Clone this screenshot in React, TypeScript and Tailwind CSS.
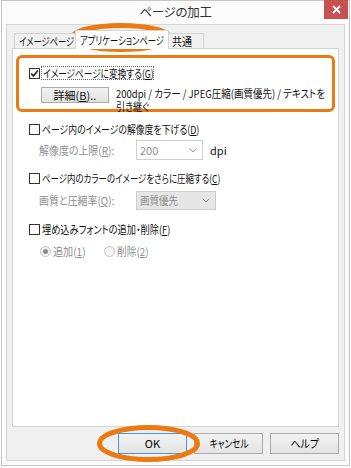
import React, { useLayoutEffect, useRef, useState } from "react";

function Box({ checked = false }: { checked?: boolean }) {
  return (
    <span className="flex h-[11px] w-[11px] shrink-0 items-center justify-center border border-[#333] bg-white">
      {checked && (
        <svg width="9" height="9" viewBox="0 0 9 9">
          <path d="M1.2 4.6 L3.5 7 L7.8 1.6" fill="none" stroke="#222" strokeWidth="1.6" />
        </svg>
      )}
    </span>
  );
}

function Radio({ on = false }: { on?: boolean }) {
  return (
    <span className="flex h-[11px] w-[11px] shrink-0 items-center justify-center rounded-full border border-[#c4c4c4] bg-[#f4f4f4]">
      {on && <span className="h-[5px] w-[5px] rounded-full bg-[#8c8c8c]" />}
    </span>
  );
}

function Chevron() {
  return (
    <svg width="8" height="5" viewBox="0 0 8 5">
      <path d="M0.5 0.5 L4 4 L7.5 0.5" fill="none" stroke="#9a9a9a" strokeWidth="1" />
    </svg>
  );
}

function U({ c }: { c: string }) {
  return <span className="underline underline-offset-[1px]">{c}</span>;
}

// squeeze a label to the width it has in the dialog's narrow UI font
function Fit({ w, center = false, children }: { w: number; center?: boolean; children: React.ReactNode }) {
  const ref = useRef<HTMLSpanElement>(null);
  const [k, setK] = useState(1);
  useLayoutEffect(() => {
    const measure = () => {
      if (ref.current) setK(Math.min(1, w / ref.current.offsetWidth));
    };
    measure();
    document.fonts?.ready.then(measure);
  }, [w]);
  return (
    <span
      ref={ref}
      className={"inline-block whitespace-nowrap " + (center ? "origin-center" : "origin-left")}
      style={{ transform: `scaleX(${k})` }}
    >
      {children}
    </span>
  );
}

function Btn({ children, focus = false }: { children: React.ReactNode; focus?: boolean }) {
  return (
    <div
      className={
        "flex h-[21px] w-[69px] items-center justify-center bg-gradient-to-b from-[#f2f2f2] to-[#e3e3e3] text-[11px] text-black " +
        (focus ? "border border-[#3c9ae8]" : "border border-[#acacac]")
      }
    >
      {children}
    </div>
  );
}

export default function App() {
  return (
    <div className="relative h-[468px] w-[351px] overflow-hidden bg-white font-['Noto_Sans_CJK_JP',sans-serif] [font-feature-settings:'palt'] text-[11px] text-[#111]">
      <div className="ml-px flex h-[466px] w-[349px] flex-col border border-[#c6c6c6] bg-[#fbfbfb]">
        {/* title bar */}
        <div className="relative flex h-[23px] shrink-0 items-center justify-center text-[12.5px] tracking-[-0.3px] text-[#333]">
          ページの加工
          <div className="absolute right-[1px] top-[-1px] flex h-[19px] w-[24px] items-center justify-center bg-[#c75050]">
            <svg width="9" height="9" viewBox="0 0 9 9">
              <path d="M1 1 L8 8 M8 1 L1 8" stroke="#fff" strokeWidth="1.8" />
            </svg>
          </div>
        </div>

        {/* client */}
        <div className="mx-[4px] flex h-[437px] flex-col border border-[#d6d6d6] bg-[#f0f0f0] px-[5px] pt-[5px]">
          {/* tabs */}
          <div className="relative z-10 ml-[2px] flex h-[18px] items-end">
            <div className="flex h-[15px] w-[62px] items-center border border-b-0 border-[#d4d4d4] bg-[#f0f0f0] pl-[4px]">
              <Fit w={55}>イメージページ</Fit>
            </div>
            <div className="-mb-px -ml-px flex h-[19px] w-[94px] items-center border border-b-0 border-[#d4d4d4] bg-white pl-[4px]">
              <Fit w={84}>アプリケーションページ</Fit>
            </div>
            <div className="-ml-px flex h-[15px] w-[36px] items-center border border-b-0 border-[#d4d4d4] bg-[#f0f0f0] pl-[3px]">
              <Fit w={20}>共通</Fit>
            </div>
          </div>

          {/* panel */}
          <div className="flex h-[379px] shrink-0 flex-col border border-[#d4d4d4] bg-white pl-[3px] pr-[3px] pt-[6px]">
            <div className="h-[57px] rounded-[6px] border-[3px] border-[#ec7a12] pl-[10px] pt-[8px]">
              <div className="flex h-[14px] items-center">
                <Box checked />
                <span className="ml-px flex h-[14px] w-[113px] items-center border border-dotted border-[#666] pl-px">
                  <Fit w={111}>
                    イメージページに変換する(<U c="G" />)
                  </Fit>
                </span>
              </div>
              <div className="mt-[7px] flex">
                <div className="ml-[12px] flex h-[16px] w-[68px] shrink-0 items-center justify-center border border-[#acacac] bg-gradient-to-b from-[#f2f2f2] to-[#e3e3e3]">
                  詳細(<U c="B" />)..
                </div>
                <div className="ml-[7px] flex flex-col items-start leading-[13px]">
                  <Fit w={209}>200dpi / カラー / JPEG圧縮(画質優先) / テキストを</Fit>
                  <Fit w={33}>引き継ぐ</Fit>
                </div>
              </div>
            </div>

            <div className="pl-[13px]">
              <div className="mt-[10px] flex h-[14px] items-center gap-[2px]">
                <Box />
                <Fit w={157}>
                  ページ内のイメージの解像度を下げる(<U c="D" />)
                </Fit>
              </div>
              <div className="mt-[4px] flex h-[20px] items-center">
                <span className="ml-[10px] w-[97px] text-[#8e8e8e]">
                  <Fit w={75}>
                    解像度の上限(<U c="R" />):
                  </Fit>
                </span>
                <div className="flex h-[20px] w-[67px] items-center justify-between border border-[#cfcfcf] bg-white pl-[3px] pr-[5px] text-[#8e8e8e]">
                  200
                  <Chevron />
                </div>
                <span className="ml-[7px]">dpi</span>
              </div>

              <div className="mt-[11px] flex h-[14px] items-center gap-[2px]">
                <Box />
                <Fit w={178}>
                  ページ内のカラーのイメージをさらに圧縮する(<U c="C" />)
                </Fit>
              </div>
              <div className="mt-[6px] flex h-[19px] items-center">
                <span className="ml-[10px] w-[97px] text-[#8e8e8e]">
                  <Fit w={75}>
                    画質と圧縮率(<U c="Q" />):
                  </Fit>
                </span>
                <div className="flex h-[19px] w-[80px] items-center justify-between border border-[#cdcdcd] bg-[#e6e6e6] pl-[3px] pr-[5px] text-[#8e8e8e]">
                  <Fit w={38}>画質優先</Fit>
                  <Chevron />
                </div>
              </div>

              <div className="mt-[12px] flex h-[14px] items-center gap-[2px]">
                <Box />
                <Fit w={128}>
                  埋め込みフォントの追加・削除(<U c="F" />)
                </Fit>
              </div>
              <div className="mt-[8px] flex h-[14px] items-center text-[#8e8e8e]">
                <span className="ml-[11px] flex w-[64px] items-center gap-[2px]">
                  <Radio on />
                  <Fit w={33}>
                    追加(<U c="1" />)
                  </Fit>
                </span>
                <span className="flex items-center gap-[2px]">
                  <Radio />
                  <Fit w={32}>
                    削除(<U c="2" />)
                  </Fit>
                </span>
              </div>
            </div>
          </div>

          {/* buttons */}
          <div className="mt-[6px] flex justify-end gap-[7px]">
            <Btn focus>OK</Btn>
            <Btn>
              <Fit w={39} center>キャンセル</Fit>
            </Btn>
            <Btn>
              <Fit w={29} center>ヘルプ</Fit>
            </Btn>
          </div>
        </div>
      </div>

      {/* annotation ellipses */}
      <svg className="pointer-events-none absolute left-0 top-0" width="351" height="468">
        <ellipse cx="121" cy="37.5" rx="48.5" ry="12" fill="none" stroke="#ec7a12" strokeWidth="5" />
        <ellipse cx="148.5" cy="443.5" rx="49" ry="16" fill="none" stroke="#ec7a12" strokeWidth="5" />
      </svg>
    </div>
  );
}
